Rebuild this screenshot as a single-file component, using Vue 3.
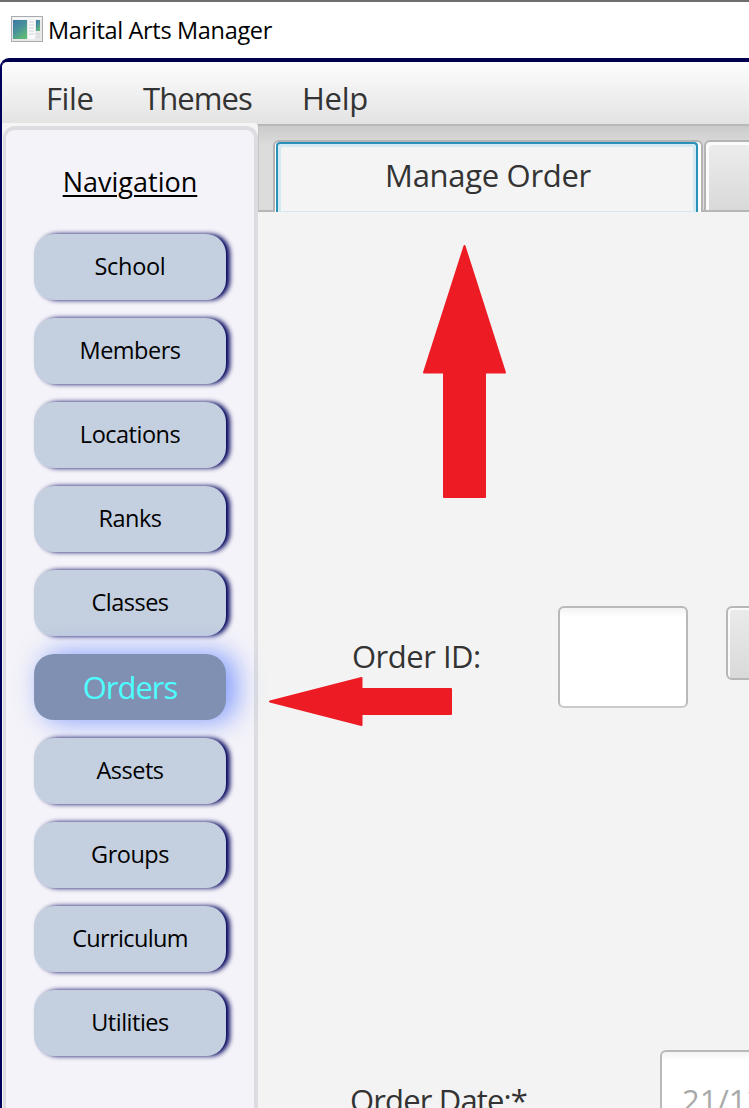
<script setup>
const menus = [
  { label: 'File', cls: 'file' },
  { label: 'Themes', cls: 'themes' },
  { label: 'Help', cls: 'help' },
]
const items = ['School', 'Members', 'Locations', 'Ranks', 'Classes', 'Orders', 'Assets', 'Groups', 'Curriculum', 'Utilities']
const active = 'Orders'
</script>

<template>
  <div class="screen">
    <header class="titlebar">
      <svg class="app-icon" width="32" height="26" viewBox="0 0 32 26">
        <defs>
          <linearGradient id="pane" x1="0" y1="0" x2="0.6" y2="1">
            <stop offset="0" stop-color="#3f78a4" />
            <stop offset="0.5" stop-color="#47909b" />
            <stop offset="1" stop-color="#5fb877" />
          </linearGradient>
        </defs>
        <rect x="0.5" y="0.5" width="31" height="25" fill="#e6e8ea" stroke="#a9adb0" />
        <rect x="1.500" y="1.500" width="29" height="2" fill="#fafafa" />
        <rect x="2" y="4" width="14" height="19" fill="url(#pane)" />
        <rect x="17" y="4" width="7" height="19" fill="#fafafa" />
        <path d="M18 6h5M18 9h5M18 12h5M18 15h5M18 18h5" stroke="#d0d2d4" />
        <rect x="25" y="4" width="4" height="11" fill="url(#pane)" />
        <path d="M25 18h4M25 21h4" stroke="#d0d2d4" />
      </svg>
      <span class="title">Marital Arts Manager</span>
    </header>
    <div class="window">
      <nav class="menubar">
        <span v-for="m in menus" :key="m.label" :class="['menu', m.cls]">{{ m.label }}</span>
      </nav>
      <div class="body">
        <aside class="side">
          <div class="panel">
            <h2>Navigation</h2>
            <button v-for="i in items" :key="i" :class="['nav', i.toLowerCase(), { active: i === active }]">{{ i }}</button>
          </div>
        </aside>
        <main class="content">
          <div class="tabs">
            <div class="tab selected"><div class="focus"><span>Manage Order</span></div></div>
            <div class="tab next"></div>
          </div>
          <div class="form">
            <div class="row id-row">
              <label class="order-id">Order ID:</label>
              <div class="field id-field"></div>
              <div class="push"></div>
            </div>
            <div class="row date-row">
              <label class="order-date">Order Date:*</label>
              <div class="field date-field"><span>21/12</span></div>
            </div>
          </div>
        </main>
      </div>
    </div>
    <svg class="arrows" width="749" height="1108" viewBox="0 0 749 1108">
      <g fill="#ed1c24" stroke="#ed1c24" stroke-width="2" stroke-linejoin="round">
        <path d="M464.500 246L505 372.500H485V497H444V372.500H424Z" />
        <path d="M270 701.500L361.500 678V689H451V714H361.500V725Z" />
      </g>
    </svg>
  </div>
</template>

<style>
body { margin: 0; overflow: hidden; }
</style>

<style scoped>
* { box-sizing: border-box; }
.screen {
  position: relative;
  width: 749px;
  height: 1108px;
  overflow: hidden;
  background: #fff;
  border-top: 2px solid #6f6d6d;
  font-family: "Open Sans", "Noto Sans", sans-serif;
  display: flex;
  flex-direction: column;
  white-space: nowrap;
}
.titlebar { height: 56px; flex: none; padding: 14px 0 0 11px; display: flex; align-items: flex-start; }
.app-icon { flex: none; }
.title { margin: -1px 0 0 5px; font-size: 23.5px; line-height: 30px; color: #000; letter-spacing: -0.33px; }
.window {
  flex: 1;
  min-height: 0;
  width: 760px;
  border-top: 4px solid #00004f;
  border-left: 2px solid #00005c;
  border-top-left-radius: 9px;
  background: #f3f3f3;
  display: flex;
  flex-direction: column;
}
.menubar {
  height: 64px;
  flex: none;
  border-bottom: 2px solid #b8b8b8;
  border-top-left-radius: 5px;
  background: linear-gradient(#fdfdfd, #f0f0f0 50%, #e3e3e3);
  padding: 15px 0 0 44px;
  display: flex;
  color: #333;
  font-size: 31px;
  line-height: 42px;
}
.file { width: 97px; letter-spacing: -0.4px; }
.themes { width: 159px; letter-spacing: -0.9px; }
.help { letter-spacing: -0.3px; }
.body { flex: 1; min-height: 0; display: flex; }
.side {
  position: relative;
  width: 256px;
  flex: none;
  margin-top: -3px;
  padding: 3px 0 0 1px;
  background: #f5f5f6;
  border-top-right-radius: 4px;
}
.panel {
  height: 1000px;
  border: 4px solid #dddde1;
  border-left-width: 3px;
  border-radius: 12px;
  background: #f4f3f9;
  padding: 34px 0 0 28px;
}
h2 {
  margin: 0 0 34px;
  width: 192px;
  text-align: center;
  font-weight: 400;
  font-size: 27px;
  line-height: 36px;
  text-decoration: underline;
  text-decoration-thickness: 2px;
  text-underline-offset: 3px;
}
.nav {
  display: block;
  width: 192px;
  height: 66px;
  margin: 0 0 18px;
  padding: 0 0 2px;
  border: 0;
  border-radius: 20px;
  background: #c4cfdf;
  box-shadow: 4px 0 5px #00005c;
  color: #000;
  font: 400 23.5px/64px "Open Sans", "Noto Sans", sans-serif;
  letter-spacing: -0.5px;
  text-align: center;
}
.school { letter-spacing: -0.3px; }
.curriculum { letter-spacing: -0.65px; }
.nav.active {
  padding: 0;
  background: #8090b2;
  color: #4dfffe;
  font-size: 31px;
  line-height: 66px;
  letter-spacing: -1px;
  box-shadow: 9px 0 26px 1px rgba(70, 110, 255, 0.65);
}
.content { flex: 1; min-width: 0; }
.tabs {
  height: 86px;
  padding: 14px 0 0 15px;
  display: flex;
  border-left: 1px solid #c4c4c4;
  border-bottom: 2px solid #b6b6b6;
  background: linear-gradient(#cbcbcb, #dcdcdc 20px);
}
.tab { flex: none; border: 2px solid #b4b4b4; border-bottom: 0; border-radius: 6px 6px 0 0; }
.selected { width: 430px; height: 72px; background: #fff; margin-left: -1px; padding: 0 3px 0 1px; }
.focus {
  height: 70px;
  border: 2px solid #2a91b8;
  border-bottom: 0;
  border-radius: 4px 4px 0 0;
  background: #f4f4f4;
  box-shadow: inset 3px 3px #d5e9f2, inset -3px -1px #d5e9f2;
  text-align: center;
  font-size: 31px;
  line-height: 62px;
  letter-spacing: -0.3px;
  color: #333;
}
.focus span { padding-left: 2px; }
.next {
  width: 80px;
  height: 70px;
  margin-left: 1px;
  box-shadow: inset 3px 3px #fbfbfb;
  background: linear-gradient(#ededed, #d9d9d9);
}
.form { padding-top: 394px; }
.row { display: flex; align-items: flex-start; color: #333; font-size: 31px; line-height: 42px; }
.row label { flex: none; }
.order-id { width: 206px; margin: 29px 0 0 94px; letter-spacing: -0.5px; }
.field {
  flex: none;
  border: 2px solid #b9b9b9;
  border-bottom-color: #cacaca;
  border-radius: 6px;
  background: linear-gradient(#f3f3f3, #fff 9px);
}
.id-field { width: 130px; height: 102px; }
.push {
  flex: none;
  width: 80px;
  height: 74px;
  margin-left: 38px;
  border: 2px solid #b7b7b7;
  border-radius: 6px;
  background: linear-gradient(#ebebeb, #d9d9d9);
  box-shadow: inset 2px 2px #fafafa;
}
.date-row { margin-top: 342px; }
.order-date { width: 310px; margin: 29px 0 0 92px; letter-spacing: -0.85px; }
.date-field { width: 130px; height: 102px; padding: 27px 0 0 20px; color: #aaa; overflow: hidden; }
.arrows { position: absolute; left: 0; top: -2px; pointer-events: none; }
</style>
